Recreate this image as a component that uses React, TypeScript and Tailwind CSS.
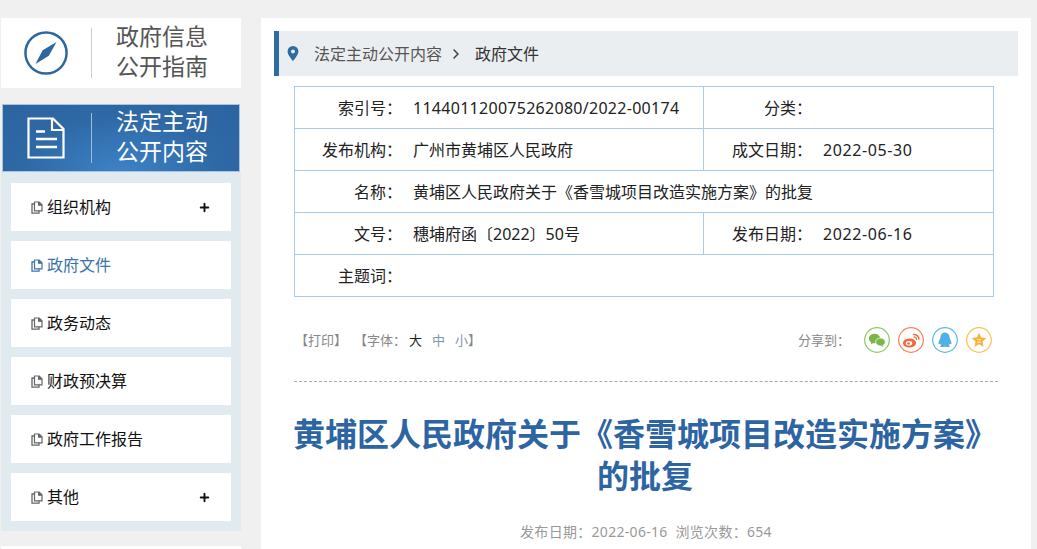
// Public-information page of a district government: side menu + document detail.
import { Plus, ChevronRight } from "lucide-react";

const FONT = "font-['Noto_Sans','Noto_Sans_CJK_SC',sans-serif]";

const MENU = [
  { label: "组织机构", more: true },
  { label: "政府文件", active: true },
  { label: "政务动态" },
  { label: "财政预决算" },
  { label: "政府工作报告" },
  { label: "其他", more: true },
];

function DocIcon({ className }: { className: string }) {
  return (
    <svg viewBox="0 0 12 13" className={className} fill="none" stroke="currentColor" strokeWidth="1.2">
      <path d="M3.5 9.8V1h4.7L11 3.8v6H3.5z" />
      <path d="M7.6 1v3.2H11" fill="currentColor" />
      <path d="M3.5 3H1v9.2h7v-2.4" strokeWidth="1.3" />
    </svg>
  );
}

function MenuItem({ label, active, more }: { label: string; active?: boolean; more?: boolean }) {
  return (
    <div className={`flex h-12 shrink-0 items-center bg-white pr-[20px] pl-[20px] text-[16px] ${active ? "text-[#3b74a8]" : "text-[#111]"}`}>
      <DocIcon className={`h-[13px] w-[12px] shrink-0 ${active ? "text-[#3b74a8]" : "text-[#666]"}`} />
      <span className="ml-[4px] flex-1">{label}</span>
      {more ? <Plus size={13} strokeWidth={3.5} className="text-[#111]" /> : null}
    </div>
  );
}

function Sidebar() {
  return (
    <aside className="flex w-[240px] shrink-0 flex-col">
      <div className="flex h-[70px] shrink-0 items-center bg-white">
        <svg viewBox="0 0 46 46" className="ml-[23px] h-[44px] w-[44px] shrink-0">
          <circle cx="23" cy="23" r="21.5" fill="none" stroke="#2d679f" strokeWidth="2.6" />
          <path d="M34 11.5 L26 26 L12 34.5 L19.5 20 Z" fill="#2d679f" />
        </svg>
        <div className="ml-[23px] h-[50px] w-px bg-[#ccc]" />
        <div className="ml-[24px] pb-[4px] text-[23px] leading-[30px] text-[#555]">
          政府信息
          <br />
          公开指南
        </div>
      </div>
      <div className="mt-[16px] ml-px flex h-[68px] w-[238px] shrink-0 items-center border border-[#a9c4de] bg-[radial-gradient(ellipse_at_50%_100%,#3d82c6_0%,#2e68a5_60%,#2c64a0_100%)]">
        <svg viewBox="0 0 38 42" className="ml-[24px] h-[42px] w-[38px] shrink-0" fill="none" stroke="#fff" strokeWidth="2.2">
          <path d="M1.5 1.5H26L36.5 12V40.5H1.5Z" />
          <path d="M25 1.5V13H36.5" />
          <path d="M9 14.5H18M9 22H30M9 30H30" strokeWidth="2.4" />
        </svg>
        <div className="ml-[26px] h-[50px] w-px bg-[#9dbcdc]" />
        <div className="ml-[24px] pb-[4px] text-[23px] leading-[30px] text-white">
          法定主动
          <br />
          公开内容
        </div>
      </div>
      <div className="flex shrink-0 flex-col gap-[10px] bg-[#e0eaef] px-[10px] pt-[11px] pb-[10px]">
        {MENU.map((m) => (
          <MenuItem key={m.label} {...m} />
        ))}
      </div>
      <div className="mt-[15px] h-[10px] shrink-0 bg-white" />
    </aside>
  );
}

function Cell({ label, value, digits }: { label: string; value: string; digits?: string }) {
  return (
    <>
      <div className="flex w-[107px] shrink-0 items-center justify-end whitespace-nowrap">{label}</div>
      <div className={`flex flex-1 items-center whitespace-nowrap pl-[11px] ${digits ?? ""}`}>{value}</div>
    </>
  );
}

function InfoTable() {
  return (
    <div className="mx-[33px] mt-[10px] w-[700px] shrink-0 border-t border-r border-l border-[#a9cbe3] text-[16px] text-[#222]">
      <div className="flex h-[42px] border-b border-[#a9cbe3]">
        <div className="flex w-[409px] border-r border-[#a9cbe3]">
          <Cell label="索引号：" value="114401120075262080/2022-00174" digits="tracking-[0.28px]" />
        </div>
        <div className="flex flex-1 pl-px">
          <Cell label="分类：" value="" />
        </div>
      </div>
      <div className="flex h-[42px] border-b border-[#a9cbe3]">
        <div className="flex w-[409px] border-r border-[#a9cbe3]">
          <Cell label="发布机构：" value="广州市黄埔区人民政府" />
        </div>
        <div className="flex flex-1 pl-px">
          <Cell label="成文日期：" value="2022-05-30" digits="tracking-[0.6px]" />
        </div>
      </div>
      <div className="flex h-[42px] border-b border-[#a9cbe3]">
        <Cell label="名称：" value="黄埔区人民政府关于《香雪城项目改造实施方案》的批复" />
      </div>
      <div className="flex h-[42px] border-b border-[#a9cbe3]">
        <div className="flex w-[409px] border-r border-[#a9cbe3]">
          <Cell label="文号：" value="穗埔府函〔2022〕50号" />
        </div>
        <div className="flex flex-1 pl-px">
          <Cell label="发布日期：" value="2022-06-16" digits="tracking-[0.6px]" />
        </div>
      </div>
      <div className="flex h-[42px] border-b border-[#a9cbe3]">
        <Cell label="主题词：" value="" />
      </div>
    </div>
  );
}

function ShareIcons() {
  return (
    <div className="mr-[2px] flex gap-[8px]">
      <svg viewBox="0 0 26 26" className="h-[26px] w-[26px]">
        <circle cx="13" cy="13" r="12.3" fill="none" stroke="#8cc866" strokeWidth="1.2" />
        <ellipse cx="10.5" cy="11.5" rx="5.6" ry="4.8" fill="#7ab648" />
        <path d="M7.5 14.5 L6.8 17.5 L10 15.5Z" fill="#7ab648" />
        <ellipse cx="16.5" cy="15" rx="4.8" ry="4" fill="#7ab648" stroke="#fff" strokeWidth="0.8" />
        <path d="M18.5 18 L19.5 20 L16.5 18.6Z" fill="#7ab648" />
      </svg>
      <svg viewBox="0 0 26 26" className="h-[26px] w-[26px]">
        <circle cx="13" cy="13" r="12.3" fill="none" stroke="#ff7f50" strokeWidth="1.2" />
        <ellipse cx="11.5" cy="16" rx="6.6" ry="4.6" fill="#f4693a" />
        <ellipse cx="11" cy="16.3" rx="3.2" ry="2.3" fill="#fff" />
        <circle cx="10.6" cy="16.5" r="1.3" fill="#f4693a" />
        <path d="M15 7.5 A5 5 0 0 1 21 12.5" fill="none" stroke="#f4693a" strokeWidth="1.5" />
        <path d="M15.5 10 A2.5 2.5 0 0 1 18.5 13" fill="none" stroke="#f4693a" strokeWidth="1.2" />
      </svg>
      <svg viewBox="0 0 26 26" className="h-[26px] w-[26px]">
        <circle cx="13" cy="13" r="12.3" fill="none" stroke="#5cb8ec" strokeWidth="1.2" />
        <path d="M13 5.5c3 0 4.4 2.2 4.6 5 .1 1.2 1.9 3.6 1.9 5.8 0 1.2-.8 1.2-1.6.2-.3 1-.8 1.6-1.2 2 1 .3 1.5.8 1 1.3-.5.3-3.5.4-4.7-.3-1.2.7-4.2.6-4.7.3-.5-.5 0-1 1-1.3-.4-.4-.9-1-1.2-2-.8 1-1.6 1-1.6-.2 0-2.2 1.8-4.6 1.9-5.8.2-2.8 1.6-5 4.6-5z" fill="#4fb0e8" />
      </svg>
      <svg viewBox="0 0 26 26" className="h-[26px] w-[26px]">
        <circle cx="13" cy="13" r="12.3" fill="none" stroke="#fcc14f" strokeWidth="1.2" />
        <path d="M13 5.8l2.2 4.7 5.1.6-3.8 3.5 1 5.1-4.5-2.5-4.5 2.5 1-5.1-3.8-3.5 5.1-.6z" fill="#f9b233" />
        <path d="M11 12.5h4l-3.5 3h3.5" fill="none" stroke="#fde3b0" strokeWidth="1" />
      </svg>
    </div>
  );
}

function Article() {
  return (
    <main className="flex h-[531px] w-[770px] shrink-0 flex-col overflow-hidden bg-white">
      <div className="mx-[13px] mt-[13px] flex h-[45px] w-[744px] shrink-0 items-center border-l-[5px] border-[#2d6ca2] bg-[#ebeef1] text-[16px] text-[#555]">
        <svg viewBox="0 0 12 16" className="ml-[8px] h-[15px] w-[12px]">
          <path fillRule="evenodd" d="M6 0a5.8 5.8 0 0 1 5.8 5.8C11.8 9.5 6 16 6 16S.2 9.5.2 5.8A5.8 5.8 0 0 1 6 0zm0 3.7a2.1 2.1 0 1 0 0 4.2 2.1 2.1 0 0 0 0-4.2z" fill="#2d6ca2" />
        </svg>
        <span className="ml-[15px]">法定主动公开内容</span>
        <ChevronRight size={16} strokeWidth={2.4} className="ml-[6px] text-[#444]" />
        <span className="ml-[11px] text-[#333]">政府文件</span>
      </div>
      <InfoTable />
      <div className="mx-[33px] mt-[30px] flex h-[26px] w-[700px] shrink-0 items-center justify-between text-[13px] text-[#888]">
        <div className="flex items-center pt-[2px]">
          <span className="ml-[1px]">【打印】</span>
          <span className="ml-[7px]">【字体：</span>
          <span className="ml-[3px] text-[#222]">大</span>
          <span className="ml-[10px] text-[#7f98ae]">中</span>
          <span className="ml-[10px] text-[#7f98ae]">小</span>
          <span>】</span>
        </div>
        <div className="flex items-center">
          <span className="mr-[14px] pt-[2px]">分享到：</span>
          <ShareIcons />
        </div>
      </div>
      <div className="mx-[33px] mt-[28px] w-[704px] shrink-0 border-t border-dashed border-[#aaa]" />
      <h1 className="mt-[31px] ml-[29px] w-[710px] shrink-0 text-center text-[32px] leading-[42px] font-bold text-[#2d64a2]">
        黄埔区人民政府关于《香雪城项目改造实施方案》的批复
      </h1>
      <div className="mt-[24px] text-center text-[14px] tracking-[0.3px] text-[#999]">发布日期：2022-06-16&nbsp;&nbsp;浏览次数：654</div>
    </main>
  );
}

export default function App() {
  return (
    <div className={`flex h-[549px] w-[1037px] gap-[20px] overflow-hidden bg-[#f0f0f0] pt-[18px] pl-px ${FONT}`}>
      <Sidebar />
      <Article />
    </div>
  );
}
